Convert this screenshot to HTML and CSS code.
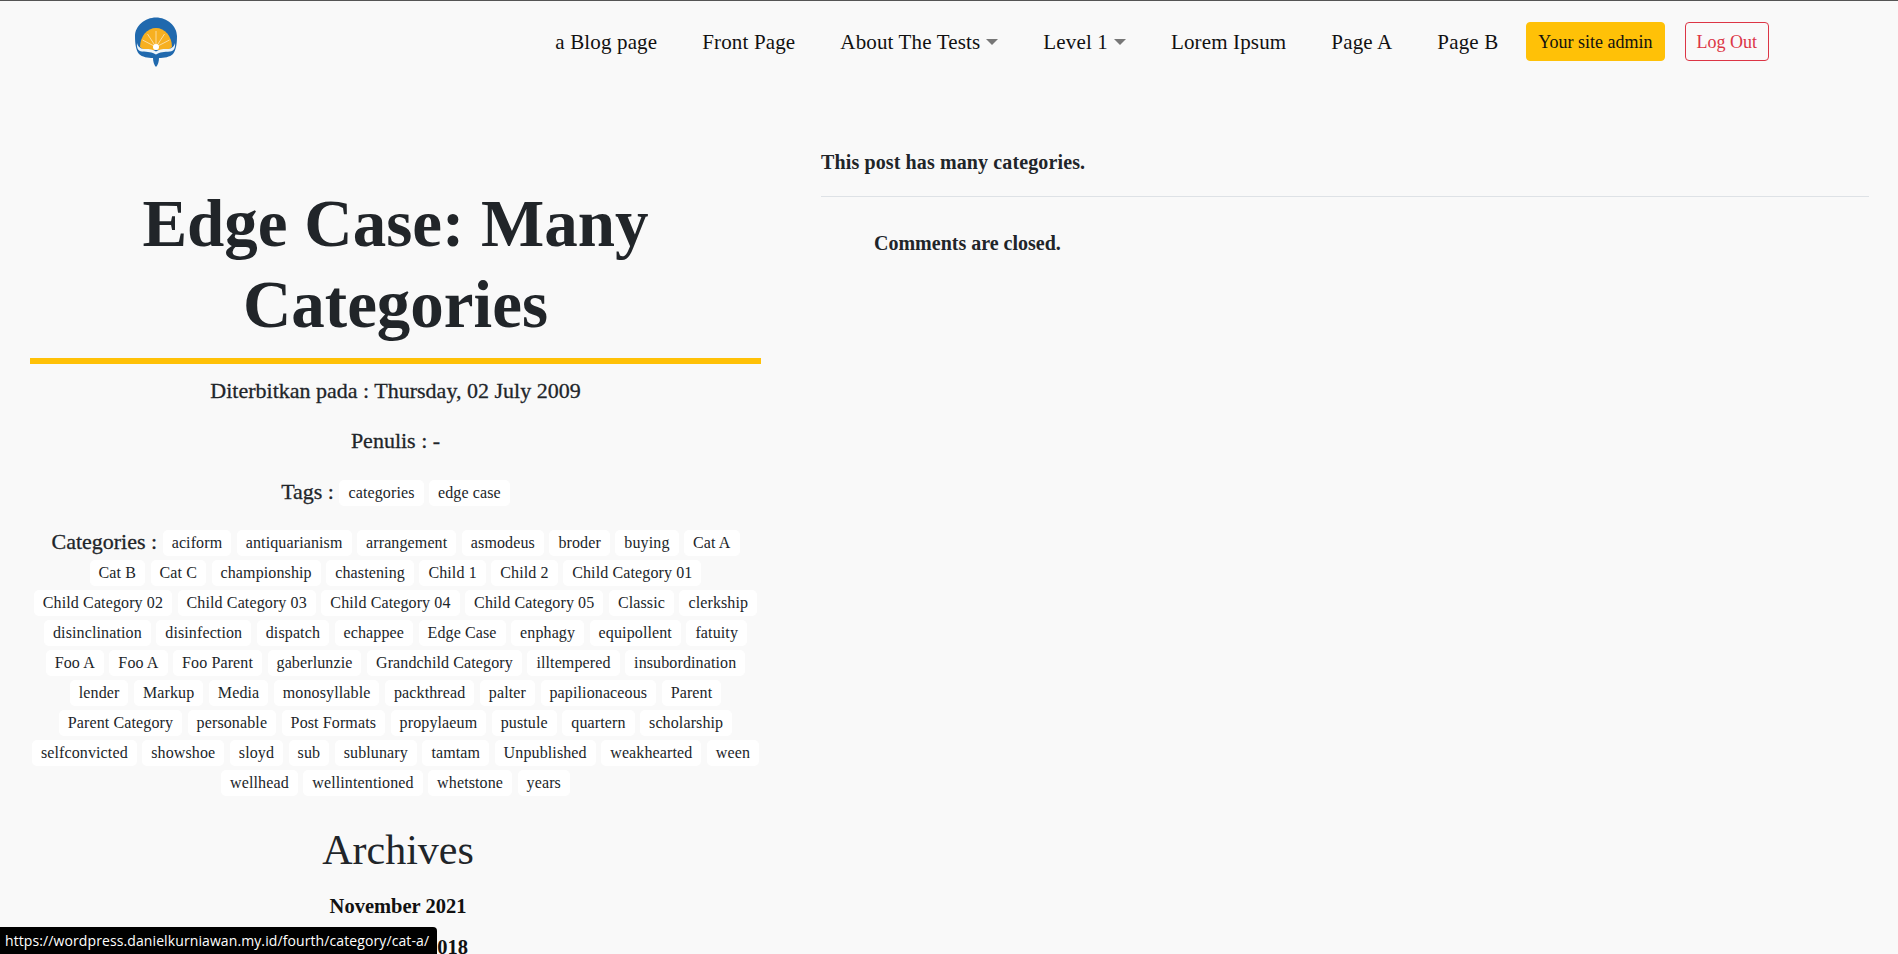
FILE: index.html
```html
<!DOCTYPE html>
<html lang="en">
<head>
  <meta charset="UTF-8" />
  <meta name="viewport" content="width=device-width, initial-scale=1.0"/>
  <title>Edge Case: Many Categories</title>
  <link rel="stylesheet" href="styles.css">
</head>
<body>

  <nav class="navbar">
    <a class="logo" href="#">
      <svg width="46" height="52" viewBox="0 0 46 52">
        <!-- dome, wings and stem -->
        <path d="M23 1.5C12 1.5 2 10 2 20c0 8 1 14 4 18 3 3 9 4 14 4 0 3 1 7 3 9 2-2 3-6 3-9 5 0 11-1 14-4 3-4 4-10 4-18C44 10 34 1.5 23 1.5z" fill="#2069ae"/>
        <path d="M7 31a16 19 0 0 1 32 0l-4 3H11z" fill="#f7b021"/>
        <path d="M23 31L23 15M23 31L14.500 18M23 31L31.500 18M23 31L9.500 24M23 31L36.500 24" stroke="#fff" stroke-width="0.8" opacity="0.7"/>
        <circle cx="23" cy="31" r="3" fill="#fff"/>
        <!-- open book -->
        <path d="M4 27c1 4 4 6 8 6 5 0 8 .5 11 2.500 3-2 6-2.500 11-2.500 4 0 7-2 8-6 .5 5-1 8-5 8.500-6 .5-10 .5-14 3-4-2.500-8-2.500-14-3-4-.5-5.500-3.500-5-8.500z" fill="#eef5fa"/>
      </svg>
    </a>
    <ul class="nav-links">
      <li><a href="#">a Blog page</a></li>
      <li><a href="#">Front Page</a></li>
      <li><a href="#" class="caret">About The Tests</a></li>
      <li><a href="#" class="caret">Level 1</a></li>
      <li><a href="#">Lorem Ipsum</a></li>
      <li><a href="#">Page A</a></li>
      <li><a href="#">Page B</a></li>
    </ul>
    <a class="btn btn-admin" href="#">Your site admin</a>
    <a class="btn btn-logout" href="#">Log Out</a>
  </nav>

  <div class="layout">
    <aside class="side">
      <h1>Edge Case: Many Categories</h1>
      <div class="rule"></div>
      <p class="meta">Diterbitkan pada : Thursday, 02 July 2009</p>
      <p class="meta">Penulis : -</p>
      <p class="meta tag-row">Tags : <a class="tag" href="#">categories</a> <a class="tag" href="#">edge case</a></p>
      <p class="meta tag-row">Categories :
        <a class="tag" href="#">aciform</a>
        <a class="tag" href="#">antiquarianism</a>
        <a class="tag" href="#">arrangement</a>
        <a class="tag" href="#">asmodeus</a>
        <a class="tag" href="#">broder</a>
        <a class="tag" href="#">buying</a>
        <a class="tag" href="#">Cat A</a>
        <a class="tag" href="#">Cat B</a>
        <a class="tag" href="#">Cat C</a>
        <a class="tag" href="#">championship</a>
        <a class="tag" href="#">chastening</a>
        <a class="tag" href="#">Child 1</a>
        <a class="tag" href="#">Child 2</a>
        <a class="tag" href="#">Child Category 01</a>
        <a class="tag" href="#">Child Category 02</a>
        <a class="tag" href="#">Child Category 03</a>
        <a class="tag" href="#">Child Category 04</a>
        <a class="tag" href="#">Child Category 05</a>
        <a class="tag" href="#">Classic</a>
        <a class="tag" href="#">clerkship</a>
        <a class="tag" href="#">disinclination</a>
        <a class="tag" href="#">disinfection</a>
        <a class="tag" href="#">dispatch</a>
        <a class="tag" href="#">echappee</a>
        <a class="tag" href="#">Edge Case</a>
        <a class="tag" href="#">enphagy</a>
        <a class="tag" href="#">equipollent</a>
        <a class="tag" href="#">fatuity</a>
        <a class="tag" href="#">Foo A</a>
        <a class="tag" href="#">Foo A</a>
        <a class="tag" href="#">Foo Parent</a>
        <a class="tag" href="#">gaberlunzie</a>
        <a class="tag" href="#">Grandchild Category</a>
        <a class="tag" href="#">illtempered</a>
        <a class="tag" href="#">insubordination</a>
        <a class="tag" href="#">lender</a>
        <a class="tag" href="#">Markup</a>
        <a class="tag" href="#">Media</a>
        <a class="tag" href="#">monosyllable</a>
        <a class="tag" href="#">packthread</a>
        <a class="tag" href="#">palter</a>
        <a class="tag" href="#">papilionaceous</a>
        <a class="tag" href="#">Parent</a>
        <a class="tag" href="#">Parent Category</a>
        <a class="tag" href="#">personable</a>
        <a class="tag" href="#">Post Formats</a>
        <a class="tag" href="#">propylaeum</a>
        <a class="tag" href="#">pustule</a>
        <a class="tag" href="#">quartern</a>
        <a class="tag" href="#">scholarship</a>
        <a class="tag" href="#">selfconvicted</a>
        <a class="tag" href="#">showshoe</a>
        <a class="tag" href="#">sloyd</a>
        <a class="tag" href="#">sub</a>
        <a class="tag" href="#">sublunary</a>
        <a class="tag" href="#">tamtam</a>
        <a class="tag" href="#">Unpublished</a>
        <a class="tag" href="#">weakhearted</a>
        <a class="tag" href="#">ween</a>
        <a class="tag" href="#">wellhead</a>
        <a class="tag" href="#">wellintentioned</a>
        <a class="tag" href="#">whetstone</a>
        <a class="tag" href="#">years</a>
      </p>
      <h2>Archives</h2>
      <ul class="archives">
        <li><a href="#">November 2021</a></li>
        <li><a href="#">September 2018</a></li>
      </ul>
    </aside>

    <main class="content">
      <p class="post-text">This post has many categories.</p>
      <hr>
      <p class="comments">Comments are closed.</p>
    </main>
  </div>

  <div class="status-bar">https://wordpress.danielkurniawan.my.id/fourth/category/cat-a/</div>

</body>
</html>
```

FILE: styles.css
```css
html, body {
  height: 100%;
  overflow: hidden;
}

body {
  margin: 0;
  background: #f9f9f9;
  color: #212529;
  font-family: "Liberation Serif", serif;
  border-top: 1px solid #555;
}

a {
  color: inherit;
  text-decoration: none;
}

.navbar {
  display: flex;
  align-items: center;
  height: 81px;
  padding: 0 129px 0 133px;
}

.logo {
  display: flex;
}

.nav-links {
  display: flex;
  list-style: none;
  margin: 0 0 0 auto;
  padding: 2px 0 0;
  font-size: 21px;
  letter-spacing: 0.15px;
  color: #111;
}

.nav-links li {
  margin-right: 45px;
}

.nav-links li:last-child {
  margin-right: 28px;
}

.caret::after {
  content: "";
  display: inline-block;
  margin-left: 6px;
  vertical-align: 4px;
  border-top: 6px solid #777;
  border-left: 6px solid transparent;
  border-right: 6px solid transparent;
}

.btn {
  height: 39px;
  line-height: 39px;
  padding: 0 11px;
  border: 1px solid;
  border-radius: 4px;
  box-sizing: border-box;
  font-size: 18px;
}

.btn-admin {
  background: #ffc107;
  border-color: #ffc107;
  color: #111;
}

.btn-logout {
  margin-left: 20px;
  border-color: #dc3545;
  color: #dc3545;
}

.layout {
  display: grid;
  grid-template-columns: 731px 1048px;
  column-gap: 60px;
  padding: 0 29px 0 30px;
}

.side {
  text-align: center;
}

h1 {
  margin: 0;
  padding-top: 101px;
  font-size: 67px;
  line-height: 81px;
  font-weight: bold;
}

.rule {
  height: 6px;
  margin-top: 13px;
  background: #ffc107;
}

.meta {
  margin: 9px 0 0;
  line-height: 36px;
  font-size: 22px;
  -webkit-text-stroke: 0.3px;
}

.meta + .meta {
  margin-top: 14px;
}

.tag-row {
  line-height: 30px;
}

.meta + .tag-row {
  margin-top: 18px;
}

.tag-row + .tag-row {
  margin-top: 20px;
}

.tag {
  display: inline-block;
  padding: 0 9px;
  height: 26px;
  line-height: 26px;
  background: #fff;
  border-radius: 5px;
  font-size: 16px;
  letter-spacing: 0.12px;
  vertical-align: 1px;
  -webkit-text-stroke: 0;
}

h2 {
  margin: 28px 0 0;
  padding-left: 5px;
  font-size: 42px;
  line-height: 50px;
  font-weight: normal;
}

.archives {
  list-style: none;
  margin: 11px 0 0;
  padding: 0 0 0 5px;
  font-size: 20.5px;
  font-weight: bold;
  color: #111;
  line-height: 41px;
}

.content {
  padding-top: 65px;
}

.post-text {
  margin: 0;
  font-size: 20px;
  letter-spacing: 0.12px;
  font-weight: bold;
  line-height: 30px;
}

hr {
  margin: 19px 0 0;
  border: 0;
  border-top: 1px solid #dee2e6;
}

.comments {
  margin: 31px 0 0 53px;
  font-size: 20px;
  font-weight: bold;
  line-height: 30px;
}

.status-bar {
  position: fixed;
  left: 0;
  bottom: 0;
  height: 27px;
  line-height: 27px;
  padding: 0 8px 0 5px;
  background: #000;
  color: #fff;
  border-top-right-radius: 4px;
  font-family: "Open Sans", sans-serif;
  font-size: 14px;
  letter-spacing: 0.1px;
}
```
